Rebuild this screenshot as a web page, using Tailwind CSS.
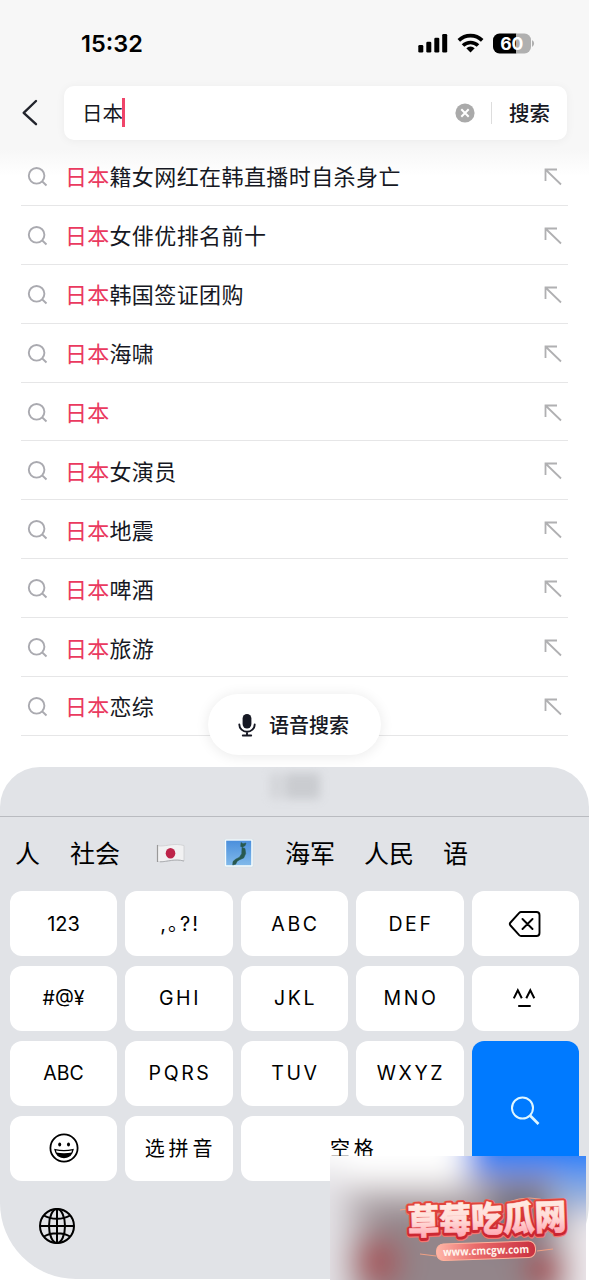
<!DOCTYPE html>
<html lang="zh-CN">
<head>
<meta charset="utf-8">
<title>搜索</title>
<script src="https://cdn.jsdelivr.net/npm/@tailwindcss/browser@4"></script>
</head>
<body class="bg-white">
<div class="relative flex h-[1280px] w-[589px] flex-col overflow-hidden bg-[linear-gradient(to_bottom,#f7f7f7_0,#f7f7f7_150px,#ffffff_176px)] font-['Inter','Noto_Sans_CJK_SC',sans-serif] text-[#161823]">
  <!-- status bar -->
  <div class="flex h-[86px] shrink-0 items-center justify-between pr-[54px] pl-[81px] text-black">
    <span class="pt-[2px] text-[23.5px] leading-none font-semibold">15:32</span>
    <div class="flex items-center gap-[9px]">
      <svg class="h-[20px] w-[30px]" viewBox="0 0 30 20"><rect x="0.3" y="12" width="5" height="7.5" rx="1.3"/><rect x="8.3" y="8.8" width="5" height="10.7" rx="1.3"/><rect x="16.3" y="4.8" width="5" height="14.7" rx="1.3"/><rect x="24.2" y="1" width="5" height="18.5" rx="1.3"/></svg>
      <svg class="h-[20px] w-[27px]" viewBox="0 0 27 20" fill="none" stroke="#000" stroke-width="3.6"><path d="M1.800 7.400a16.800 16.800 0 0 1 23.400 0"/><path d="M6 12.600a10.600 10.600 0 0 1 15 0"/><path d="M13.500 19.400l-4.200-4.200a6 6 0 0 1 8.400 0z" fill="#000" stroke="none"/></svg>
      <svg class="h-[21px] w-[42px]" viewBox="0 0 42 21"><defs><clipPath id="cell"><rect x="0" y="0.5" width="38" height="20" rx="6.5"/></clipPath></defs><g clip-path="url(#cell)"><rect width="23.3" height="21"/><rect x="23.3" width="15" height="21" fill="#b0b0b0"/></g><path d="M39 7.300c2.800 1 2.800 5.400 0 6.400z" fill="#b0b0b0"/><text x="18.800" y="16.800" text-anchor="middle" font-family="Inter" font-weight="700" font-size="17.500" fill="#fff">60</text></svg>
    </div>
  </div>
  <!-- search field -->
  <div class="flex h-[61px] shrink-0 items-start pr-[22px] pl-[21px]">
    <svg class="mt-[12px] h-[30px] w-[18px]" viewBox="0 0 18 30" fill="none" stroke="#22242c" stroke-width="2.400" stroke-linecap="round" stroke-linejoin="round"><path d="M15 3 2.700 14.800 15 26.200"/></svg>
    <div class="ml-[25px] flex h-[53.500px] flex-1 items-center rounded-[10px] bg-white pr-[17px] pl-[18px] shadow-[0_1px_10px_rgba(0,0,0,0.05)]">
      <span class="pt-[2px] text-[20.500px] leading-none">日本</span>
      <span class="-ml-[1px] h-[29px] w-[2.500px] bg-[#f0456a]"></span>
      <svg class="ml-auto h-[20px] w-[20px]" viewBox="0 0 20 20"><circle cx="10" cy="10" r="9.600" fill="#aaa"/><path d="M6.300 6.300l7.400 7.400M13.700 6.300l-7.400 7.400" stroke="#fff" stroke-width="2"/></svg>
      <span class="mr-[17px] ml-[16px] h-[22px] w-px bg-[#ddd]"></span>
      <span class="pt-[2px] text-[20.500px] leading-none font-medium">搜索</span>
    </div>
  </div>
  <!-- suggestions -->
  <ul id="list" class="h-[620px] shrink-0 px-[21px]"></ul>
  <!-- keyboard -->
  <section class="relative flex h-[512px] shrink-0 flex-col overflow-hidden rounded-t-[40px] rounded-b-[76px] bg-[#e1e3e7] text-black">
    <div class="flex h-[50px] shrink-0 justify-center border-b border-[#b9bbc0]">
      <div class="mt-[6px] flex h-[26px] w-[50px] gap-[3px] opacity-40 blur-[5px]"><span class="w-[12px] bg-[#bfc0c4]"></span><span class="flex-1 bg-[#a8aaae]"></span></div>
    </div>
    <div class="flex h-[74px] shrink-0 items-center pl-[15px] text-[25px] whitespace-nowrap">
      <span class="w-[55px] pt-[1px]">人</span>
      <span class="w-[86px] pt-[1px]">社会</span>
      <svg class="h-[24px] w-[30px]" viewBox="0 0 30 24"><path d="M1.500 3q1 1 2.500 1c8 0 14-3 24-.5v15.500c-10-2.500-16 .8-24 .8q-1.500 0-2.500-1z" fill="#f1f1f2" stroke="#cdced1" stroke-width=".8"/><path d="M1.500 3v17" stroke="#999" stroke-width="1.200"/><path d="M4 19.800c8 0 14-3.300 24-.8" stroke="#aeb0b4" fill="none"/><ellipse cx="14.500" cy="11.200" rx="4.800" ry="5.200" fill="#bd2449"/></svg>
      <svg class="ml-[38px] h-[30px] w-[30px]" viewBox="0 0 30 30"><defs><linearGradient id="sea" x1="0" y1="0" x2="0" y2="1"><stop stop-color="#4b8fdc"/><stop offset="1" stop-color="#80b9ea"/></linearGradient></defs><rect x="0.500" y="0" width="28.500" height="28" rx="1.500" fill="#f6fbfd" stroke="#cddde6" stroke-width=".6"/><rect x="2.200" y="1.700" width="25" height="24.500" fill="url(#sea)"/><path d="M17 3.500l2 1.300 3-.8-.8 2.500-2.700 1.800-1.800-.8z M18 8.500l3 1 .7 5-2 4.500-4 1.700-2.500 1.500-1.500 3-3 .8.300-3.500 2.500-2.200 4-2.100 2.200-3.500z" fill="#28594f" stroke="#28594f" stroke-width=".5"/></svg>
      <span class="ml-[31px] w-[79px] pt-[1px]">海军</span>
      <span class="w-[79px] pt-[1px]">人民</span>
      <span class="pt-[1px]">语</span>
    </div>
    <div id="keys" class="grid h-[290px] shrink-0 grid-cols-5 grid-rows-4 gap-x-[8.400px] gap-y-[9.500px] px-[10px] text-[20px]"></div>
    <svg class="mt-[26px] ml-[38px] h-[38px] w-[38px]" viewBox="0 0 38 38" fill="none" stroke="#000" stroke-width="2"><circle cx="19" cy="19" r="17"/><ellipse cx="19" cy="19" rx="8" ry="17"/><path d="M19 2v34M2 19h34M6 8.500c7 4.300 19 4.300 26 0M6 29.500c7-4.300 19-4.300 26 0"/></svg>
  </section>
  <!-- floating voice search pill -->
  <div class="absolute top-[694px] left-[208px] flex h-[61px] w-[173px] items-center justify-center rounded-full bg-white shadow-[0_1px_14px_rgba(0,0,0,0.09)]">
    <svg class="mr-[13px] -ml-[2px] h-[24px] w-[18px]" viewBox="0 0 18 24" fill="none" stroke="#161823" stroke-width="1.900" stroke-linecap="round"><rect x="4.600" y="1" width="8.800" height="14.500" rx="4.400" fill="#161823" stroke="none"/><path d="M1.300 11.500a7.700 7.300 0 0 0 15.400 0M9 19v3M4.800 22.500h8.400"/></svg>
    <span class="pt-[2px] text-[20px] leading-none font-medium">语音搜索</span>
  </div>
  <!-- site badge -->
  <svg class="absolute top-[1156px] left-[330px] h-[124px] w-[256px]" viewBox="0 0 256 124">
    <defs>
      <filter id="soft" filterUnits="userSpaceOnUse" x="-80" y="-80" width="420" height="290"><feGaussianBlur stdDeviation="15"/></filter>
      <linearGradient id="face" x1="0" y1="0" x2="0" y2="1"><stop offset=".1" stop-color="#fff1e6"/><stop offset=".55" stop-color="#ffdcd8"/><stop offset="1" stop-color="#ff94a5"/></linearGradient>
      <linearGradient id="edge" x1="0" y1="0" x2="0" y2="1"><stop stop-color="#e8503f"/><stop offset="1" stop-color="#c61f30"/></linearGradient>
      <linearGradient id="bar" x1="0" y1="0" x2="1" y2="0"><stop stop-color="#ffb6a8"/><stop offset=".4" stop-color="#e96a6a"/><stop offset="1" stop-color="#c9303f"/></linearGradient>
    </defs>
    <g filter="url(#soft)">
      <rect x="-80" y="-80" width="420" height="290" fill="#b8afb3"/>
      <rect x="-80" y="-80" width="215" height="108" fill="#fff"/>
      <rect x="-80" y="10" width="96" height="200" fill="#e4e2e6"/>
      <rect x="40" y="52" width="170" height="140" fill="#93858a"/>
      <rect x="160" y="25" width="60" height="60" fill="#757180"/>
      <rect x="138" y="-80" width="200" height="97" fill="#1c80fa"/>
      <rect x="225" y="17" width="100" height="35" fill="#86abe0"/>
      <rect x="240" y="56" width="90" height="140" fill="#eeeaee"/>
      <ellipse cx="46" cy="106" rx="26" ry="26" fill="#a4575b"/>
      <ellipse cx="216" cy="114" rx="20" ry="18" fill="#a3252f"/>
    </g>
    <path d="M70 54l15-2M90 98l16 2M207 95l16-2M178 46q22-8 42 0" stroke="#f0a084" stroke-width="1" fill="none"/>
    <g transform="rotate(-2 157 64)" font-family="'Noto Sans CJK SC',sans-serif" font-weight="900" font-size="35.500" stroke-linejoin="round">
      <text x="77.500" y="77" textLength="159" lengthAdjust="spacingAndGlyphs" fill="#a51e2c" stroke="#f27770" stroke-width="7">草莓吃瓜网</text>
      <text x="77.500" y="76.500" textLength="159" lengthAdjust="spacingAndGlyphs" fill="#d8323e" stroke="url(#edge)" stroke-width="5.500">草莓吃瓜网</text>
      <text x="77.500" y="76" textLength="159" lengthAdjust="spacingAndGlyphs" fill="url(#face)" stroke="url(#face)" stroke-width=".6">草莓吃瓜网</text>
    </g>
    <g transform="rotate(-2 156 94)">
      <rect x="106.500" y="86.500" width="99" height="16.500" rx="7" fill="url(#bar)" stroke="#ffb19c" stroke-width="1"/>
      <text x="156" y="98.500" text-anchor="middle" textLength="86" lengthAdjust="spacingAndGlyphs" font-family="'Open Sans',sans-serif" font-weight="700" font-size="11" fill="#fff5ee">www.cmcgw.com</text>
    </g>
  </svg>
</div>
<script>
const suggestions = ['籍女网红在韩直播时自杀身亡', '女俳优排名前十', '韩国签证团购', '海啸', '', '女演员', '地震', '啤酒', '旅游', '恋综'];
document.getElementById('list').innerHTML = suggestions.map(s => `
  <li class="flex h-[58.900px] items-center border-b border-[#e6e6e7] pt-[2px] pr-[6px] pl-[6px]">
    <svg class="h-[22px] w-[22px]" viewBox="0 0 22 22" fill="none" stroke="#aaaab0" stroke-width="1.900"><circle cx="9.600" cy="9.800" r="7.800"/><path d="M15 15.300l4.500 4.200"/></svg>
    <span class="ml-[16px] pt-[1px] text-[22px] leading-none tracking-[0.420px]"><span class="text-[#ea3a5f] tracking-[0.200px]">日本</span>${s}</span>
    <svg class="ml-auto h-[18px] w-[18px]" viewBox="0 0 18 18" fill="none" stroke="#b0b0b2" stroke-width="1.800"><path d="M1.500 13V1.500H13M1.500 1.500l15.500 15"/></svg>
  </li>`).join('');

const wide = t => `<span class="pt-[1px] pl-[2px] text-[19.500px] tracking-[2.600px]">${t}</span>`;
const cjk = t => `<span class="pt-[1px] pl-[3px] tracking-[3.800px]">${t}</span>`;
const icons = {
  del: '<svg class="h-[28px] w-[34px]" viewBox="0 0 34 28" fill="none" stroke="#000" stroke-width="1.900" stroke-linejoin="round" stroke-linecap="round"><path d="M13 2h15.500a3 3 0 0 1 3 3v18a3 3 0 0 1-3 3H13q-1 0-1.800-.8L2.500 15.500q-1.400-1.500 0-3L11.200 2.800Q12 2 13 2zM14.500 9l10 10M24.500 9l-10 10"/></svg>',
  kao: '<svg class="h-[22px] w-[24px]" viewBox="0 0 24 22" fill="none" stroke="#000" stroke-width="2"><path d="M.8 10.300l4-8 4 8M13.300 10.300l4-8 4 8M5.200 18h12.500"/></svg>',
  face: '<svg class="h-[30px] w-[30px]" viewBox="0 0 30 30" fill="none" stroke="#000" stroke-width="1.800"><circle cx="15" cy="15" r="13.600"/><ellipse cx="10.700" cy="11.500" rx="1.500" ry="1.900" fill="#000" stroke="none"/><ellipse cx="19.500" cy="11.500" rx="1.500" ry="1.900" fill="#000" stroke="none"/><path d="M6 16.700q9 2 18 0-1.500 7.800-9 7.800T6 16.700z" stroke-width="1.300"/><path d="M7 19.500q8 1.500 16 0-2 5-8 5t-8-5z" fill="#000" stroke="none"/></svg>',
  go: '<svg class="h-[30px] w-[30px]" viewBox="0 0 30 30" fill="none" stroke="#dff6ff"><circle cx="12.500" cy="12" r="10.500" stroke-width="2"/><path d="M19.800 19.300l8.700 8.700" stroke-width="2.700"/></svg>'
};
const keys = [
  '123', `<span class="pl-[2px] tracking-[2px]">,<span class="[font-feature-settings:'halt']">。</span>?!</span>`, wide('ABC'), wide('DEF'), icons.del,
  '<span class="pt-[1px] text-[19.500px]">#@¥</span>', wide('GHI'), wide('JKL'), wide('MNO'), icons.kao,
  '<span class="pt-[1px] text-[19.500px]">ABC</span>', wide('PQRS'), wide('TUV'), wide('WXYZ'), null,
  icons.face, cjk('选拼音'), 'space'
];
document.getElementById('keys').innerHTML = keys.map(k =>
  k === null ? `<div class="row-span-2 flex items-center justify-center rounded-[12px] bg-[#007aff]">${icons.go}</div>`
  : k === 'space' ? `<div class="col-span-2 flex items-center justify-center rounded-[12px] bg-white">${cjk('空格')}</div>`
  : `<div class="flex items-center justify-center rounded-[12px] bg-white">${k}</div>`).join('');
</script>
</body>
</html>
